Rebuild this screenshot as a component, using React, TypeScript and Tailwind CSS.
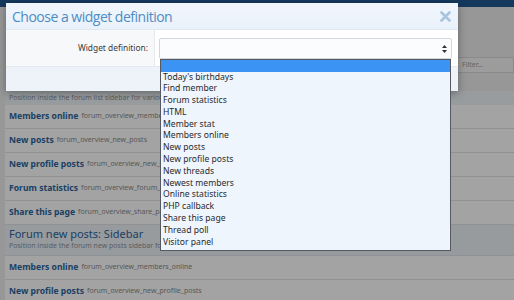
import React from "react";

const options = [
  "",
  "Today's birthdays",
  "Find member",
  "Forum statistics",
  "HTML",
  "Member stat",
  "Members online",
  "New posts",
  "New profile posts",
  "New threads",
  "Newest members",
  "Online statistics",
  "PHP callback",
  "Share this page",
  "Thread poll",
  "Visitor panel",
];

const Row = ({ title, code }: { title: string; code: string }) => (
  <div className="h-[24px] flex items-center pl-[4px] border-b border-[#e3e3e3] bg-white whitespace-nowrap">
    <span className="text-[8.6px] font-bold text-[#2d659c]">{title}</span>
    <span className="text-[7px] text-[#8a8a8a] ml-[3px]">{code}</span>
  </div>
);

const App: React.FC = () => {
  return (
    <div className="relative w-[514px] h-[300px] overflow-hidden font-['Noto_Sans',sans-serif]">
      {/* page behind the dialog */}
      <div className="h-[300px] bg-[#ececec]">
        <div className="h-[7px] bg-[#215a92]" />
        <div className="h-[50px]" />
        <div className="flex justify-end h-[16px]">
          <div className="w-[62px] h-[16px] border border-[#d8d8d8] bg-[#f5f5f5] text-[7px] text-[#9a9a9a] pl-[9px] leading-[14px]">
            Filter...
          </div>
        </div>
        <div className="h-[18px]" />
        <div className="ml-[5px]">
          <div className="h-[14px] bg-[#f0f4f8] pl-[4px] text-[7px] leading-[14px] text-[#8c9299] whitespace-nowrap">
            Position inside the forum list sidebar for various statistics
          </div>
          <Row title="Members online" code="forum_overview_members_online" />
          <Row title="New posts" code="forum_overview_new_posts" />
          <Row title="New profile posts" code="forum_overview_new_profile_posts" />
          <Row title="Forum statistics" code="forum_overview_forum_statistics" />
          <Row title="Share this page" code="forum_overview_share_page" />
          <div className="h-[31px] bg-[#edf2f8] pl-[4px] pt-[2px] border-b border-[#dfe5ec] whitespace-nowrap">
            <div className="text-[11px] leading-[14px] text-[#2d659c]">Forum new posts: Sidebar</div>
            <div className="text-[7px] leading-[10px] text-[#8c9299]">
              Position inside the forum new posts sidebar for various
            </div>
          </div>
          <Row title="Members online" code="forum_overview_members_online" />
          <Row title="New profile posts" code="forum_overview_new_profile_posts" />
        </div>
      </div>

      {/* overlay */}
      <div className="absolute inset-0 bg-black/[0.36]" />

      {/* dialog */}
      <div className="absolute left-[6px] top-[3px] w-[452px] bg-white shadow-[0_2px_8px_rgba(0,0,0,0.35)]">
        <div className="h-[27px] flex items-center justify-between px-[6px] bg-gradient-to-b from-[#f1f6fc] to-[#e9f1fa] border-b border-[#dfe7f0]">
          <span className="text-[14px] text-[#4e8cc4] font-['Open_Sans',sans-serif] tracking-[-0.5px]">
            Choose a widget definition
          </span>
          <svg width="11" height="11" viewBox="0 0 11 11" className="mr-[1px]">
            <path d="M1.5 1.5 L9.5 9.5 M9.5 1.5 L1.5 9.5" stroke="#a9c4dd" strokeWidth="2.6" strokeLinecap="round" />
          </svg>
        </div>
        <div className="h-[36px] flex">
          <div className="w-[149px] bg-[#f7f8fa] border-r border-[#e6e8eb] flex items-center justify-end pr-[6px]">
            <span className="text-[8.4px] text-[#3b3b3b]">Widget definition:</span>
          </div>
          <div className="flex-1 flex items-center pl-[4px] pr-[6px]">
            <div className="relative w-full h-[21px] border border-[#d3d6da] rounded-[2px] bg-[#fbfcfd]">
              <svg width="5" height="8" viewBox="0 0 5 8" className="absolute right-[4px] top-[6px]">
                <path d="M2.5 0 L5 3 L0 3 Z M2.5 8 L5 5 L0 5 Z" fill="#333" />
              </svg>
              <div className="absolute left-0 top-[20px] w-[291px] h-[192px] border border-[#565a60] bg-[#eef5fd] z-10">
                {options.map((o, i) => (
                  <div
                    key={i}
                    className={
                      i === 0
                        ? "h-[12px] bg-[#3b94f4]"
                        : "h-[11.8px] leading-[11.8px] pl-[2px] text-[8.6px] text-[#2a2a2a] whitespace-nowrap"
                    }
                  >
                    {o}
                  </div>
                ))}
              </div>
            </div>
          </div>
        </div>
        <div className="h-[25px] bg-[#eef3f9] border-t border-[#e3e9f0]" />
      </div>
    </div>
  );
};

export default App;
